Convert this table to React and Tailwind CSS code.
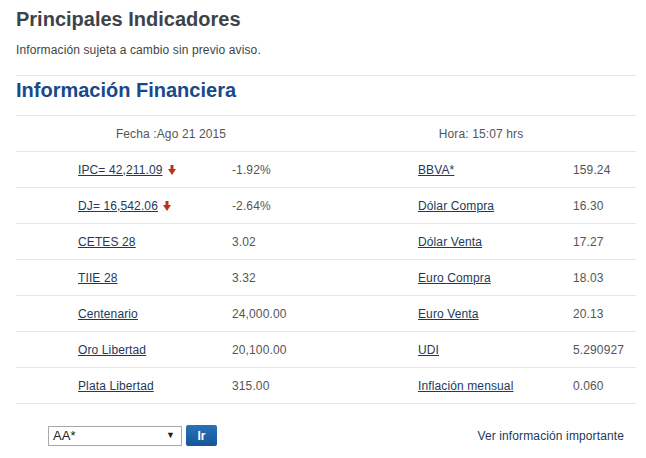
import React from "react";

const rows = [
  { l: "IPC= 42,211.09", down: true, lv: "-1.92%", r: "BBVA*", rv: "159.24" },
  { l: "DJ= 16,542.06", down: true, lv: "-2.64%", r: "Dólar Compra", rv: "16.30" },
  { l: "CETES 28", lv: "3.02", r: "Dólar Venta", rv: "17.27" },
  { l: "TIIE 28", lv: "3.32", r: "Euro Compra", rv: "18.03" },
  { l: "Centenario", lv: "24,000.00", r: "Euro Venta", rv: "20.13" },
  { l: "Oro Libertad", lv: "20,100.00", r: "UDI", rv: "5.290927" },
  { l: "Plata Libertad", lv: "315.00", r: "Inflación mensual", rv: "0.060" },
];

function DownArrow() {
  return (
    <svg width="8" height="10" viewBox="0 0 8 10" className="ml-[5px] inline-block">
      <rect x="2.5" y="0" width="3" height="5" fill="#b5351c" />
      <polygon points="0,4 8,4 4,10" fill="#b5351c" />
    </svg>
  );
}

export default function App() {
  return (
    <div
      className="w-[646px] h-[458px] bg-white px-4 text-[12px] tracking-[0.12px] text-[#555]"
      style={{ fontFamily: '"Liberation Sans", Arial, sans-serif' }}
    >
      {/* Page header */}
      <h1 className="pt-[7px] text-[20px] leading-[24px] font-bold tracking-normal text-[#3d434a]">
        Principales Indicadores
      </h1>
      <p className="mt-[11px] leading-[16px] text-[#444]">
        Información sujeta a cambio sin previo aviso.
      </p>
      <div className="mt-[17px] w-[620px] border-t border-[#e6e6e6]"></div>

      {/* Section title */}
      <h2 className="pt-[2px] text-[20px] leading-[24px] font-bold tracking-normal text-[#18498a]">
        Información Financiera
      </h2>

      {/* Indicators table */}
      <div className="mt-[13px] w-[620px] border-t border-[#e6e6e6]">
        <div className="flex h-[36px] items-center border-b border-[#e6e6e6] text-[#555]">
          <div className="w-[310px] text-center">Fecha :Ago 21 2015</div>
          <div className="w-[310px] text-center">Hora: 15:07 hrs</div>
        </div>
        {rows.map((row) => (
          <div
            key={row.l}
            className="grid h-[36px] grid-cols-[154px_186px_155px_1fr] items-center border-b border-[#e6e6e6] pl-[62px]"
          >
            <div className="flex items-center">
              <a href="#" className="text-[#23395b] underline">
                {row.l}
              </a>
              {row.down && <DownArrow />}
            </div>
            <div>{row.lv}</div>
            <div>
              <a href="#" className="text-[#23395b] underline">
                {row.r}
              </a>
            </div>
            <div>{row.rv}</div>
          </div>
        ))}
      </div>

      {/* Bottom controls */}
      <div className="mt-[21px] flex w-[620px] items-center">
        <div className="ml-[32px] flex h-[20px] w-[134px] items-center justify-between border border-[#a9a9a9] bg-white pl-[4px] pr-[6px] text-[13px] text-[#222]">
          <span>AA*</span>
          <span className="text-[9px] text-[#222]">▼</span>
        </div>
        <button className="ml-[4px] h-[21px] w-[31px] rounded-[2px] bg-gradient-to-b from-[#2a72b8] to-[#14569a] text-[12px] font-bold text-white">
          Ir
        </button>
        <a href="#" className="ml-auto mr-[12px] text-[#23395b]">
          Ver información importante
        </a>
      </div>
    </div>
  );
}
